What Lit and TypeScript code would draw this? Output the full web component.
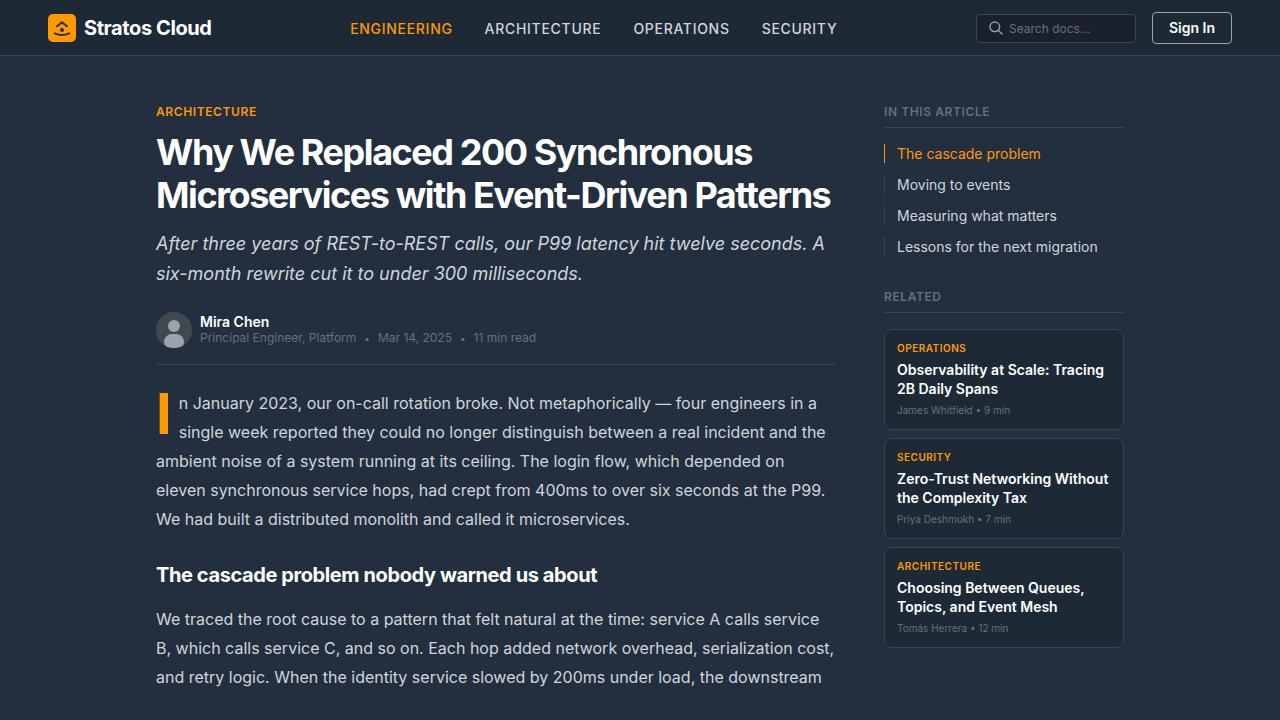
import { LitElement, html, css } from "lit";
import { customElement } from "lit/decorators.js";
import { classMap } from "lit/directives/class-map.js";

interface Story {
  topic: string;
  title: string;
  byline: string;
}

const SECTIONS = ["Engineering", "Architecture", "Operations", "Security"];

const CONTENTS = [
  "The cascade problem",
  "Moving to events",
  "Measuring what matters",
  "Lessons for the next migration",
];

const RELATED: Story[] = [
  {
    topic: "Operations",
    title: "Observability at Scale: Tracing 2B Daily Spans",
    byline: "James Whitfield • 9 min",
  },
  {
    topic: "Security",
    title: "Zero-Trust Networking Without the Complexity Tax",
    byline: "Priya Deshmukh • 7 min",
  },
  {
    topic: "Architecture",
    title: "Choosing Between Queues, Topics, and Event Mesh",
    byline: "Tomás Herrera • 12 min",
  },
];

@customElement("site-header")
export class SiteHeader extends LitElement {
  static styles = css`
    :host {
      display: block;
      background: #1e2936;
      border-bottom: 1px solid #3c464e;
    }
    .bar {
      display: flex;
      align-items: center;
      justify-content: space-between;
      padding: 12px 48px 11px;
    }
    .brand {
      display: flex;
      align-items: center;
      gap: 8px;
      color: #ffffff;
      font-size: 20px;
      line-height: 28px;
      font-weight: 700;
      letter-spacing: -0.02em;
      text-decoration: none;
    }
    .nav {
      display: flex;
      gap: 32px;
    }
    .link {
      color: #d1d5db;
      font-size: 14px;
      line-height: 21px;
      font-weight: 500;
      letter-spacing: 0.05em;
      text-transform: uppercase;
      text-decoration: none;
    }
    .link.active {
      color: #ff9900;
    }
    .actions {
      display: flex;
      align-items: center;
      gap: 16px;
    }
    .search {
      display: flex;
      align-items: center;
      gap: 6px;
      box-sizing: border-box;
      width: 160px;
      padding: 6px 12px;
      border: 1px solid #3c464e;
      border-radius: 4px;
      background: #1a202c;
    }
    .search svg {
      flex: none;
    }
    .field {
      flex: 1;
      min-width: 0;
      height: 15px;
      padding: 0;
      border: 0;
      outline: 0;
      background: none;
      color: #d1d5db;
      font: inherit;
      font-size: 12px;
      line-height: 15px;
    }
    .field::placeholder {
      color: #687078;
      opacity: 1;
    }
    .sign-in {
      padding: 5px 16px;
      border: 1px solid #9ca3af;
      border-radius: 4px;
      background: transparent;
      color: #ffffff;
      font: inherit;
      font-size: 14px;
      line-height: 20px;
      font-weight: 600;
    }
  `;

  render() {
    return html`
      <header class="bar">
        <a class="brand" href="#home">
          <svg width="28" height="28" viewBox="0 0 28 28" aria-hidden="true">
            <rect width="28" height="28" rx="5" fill="#ff9900" />
            <g fill="none" stroke="#232f3e" stroke-width="2" stroke-linecap="round" stroke-linejoin="round">
              <path d="M9 12.3 14 8.2l5 4.1" />
              <path d="M6.8 19.3c4.4 2 10 2 14.4 0" />
            </g>
            <circle cx="14" cy="16" r="2" fill="#232f3e" />
          </svg>
          <span>Stratos Cloud</span>
        </a>
        <nav class="nav" aria-label="Sections">
          ${SECTIONS.map(
            (name, i) => html`<a
              class=${classMap({ link: true, active: i === 0 })}
              href="#${name.toLowerCase()}"
              >${name}</a
            >`,
          )}
        </nav>
        <div class="actions">
          <label class="search">
            <svg
              width="14"
              height="14"
              viewBox="0 0 14 14"
              fill="none"
              stroke="#9ca3af"
              stroke-width="1.4"
              stroke-linecap="round"
              aria-hidden="true"
            >
              <circle cx="5.8" cy="5.8" r="4.8" />
              <path d="m9.4 9.4 3.7 3.7" />
            </svg>
            <input class="field" type="text" placeholder="Search docs..." aria-label="Search docs" />
          </label>
          <button class="sign-in" type="button">Sign In</button>
        </div>
      </header>
    `;
  }
}

@customElement("article-body")
export class ArticleBody extends LitElement {
  static styles = css`
    :host {
      display: block;
      min-width: 0;
    }
    .topic {
      margin: 0 0 11px;
      color: #ff9900;
      font-size: 12px;
      line-height: 16px;
      font-weight: 600;
      letter-spacing: 0.05em;
      text-transform: uppercase;
    }
    .title {
      margin: 0 0 12px;
      color: #ffffff;
      font-size: 36px;
      line-height: 43px;
      font-weight: 700;
      letter-spacing: -0.04em;
    }
    .summary {
      margin: 0 0 23px;
      font-size: 18px;
      line-height: 30px;
      font-style: italic;
    }
    .author {
      display: flex;
      align-items: center;
      gap: 8px;
      padding-bottom: 16px;
      margin-bottom: 24px;
      border-bottom: 1px solid #3c464e;
    }
    .name {
      color: #ffffff;
      font-size: 14px;
      line-height: 16px;
      font-weight: 600;
    }
    .meta {
      display: flex;
      gap: 8px;
      color: #687078;
      font-size: 12px;
      line-height: 16px;
    }
    .dot {
      font-size: 10px;
    }
    .text {
      margin: 0;
      font-size: 16px;
      line-height: 29px;
    }
    .lead::first-letter {
      float: left;
      padding-right: 7px;
      color: #ff9900;
      font-size: 56px;
      line-height: 50px;
      font-weight: 700;
    }
    .heading {
      margin: 27px 0 16px;
      color: #ffffff;
      font-size: 20px;
      line-height: 28px;
      font-weight: 700;
      letter-spacing: -0.02em;
    }
  `;

  render() {
    return html`
      <article>
        <p class="topic">Architecture</p>
        <h1 class="title">Why We Replaced 200 Synchronous Microservices with Event-Driven Patterns</h1>
        <p class="summary">
          After three years of REST-to-REST calls, our P99 latency hit twelve seconds. A six-month
          rewrite cut it to under 300 milliseconds.
        </p>
        <div class="author">
          <svg width="36" height="36" viewBox="0 0 36 36" aria-hidden="true">
            <clipPath id="disc"><circle cx="18" cy="18" r="18" /></clipPath>
            <g clip-path="url(#disc)">
              <rect width="36" height="36" fill="#41484f" />
              <circle cx="18" cy="14" r="6" fill="#9ca3af" />
              <rect x="8" y="22" width="20" height="16" rx="8" fill="#9ca3af" />
            </g>
          </svg>
          <div>
            <div class="name">Mira Chen</div>
            <div class="meta">
              <span>Principal Engineer, Platform</span>
              <span class="dot">•</span>
              <span>Mar 14, 2025</span>
              <span class="dot">•</span>
              <span>11 min read</span>
            </div>
          </div>
        </div>
        <p class="text lead">In January 2023, our on-call rotation broke. Not metaphorically — four
          engineers in a single week reported they could no longer distinguish between a real incident
          and the ambient noise of a system running at its ceiling. The login flow, which depended on
          eleven synchronous service hops, had crept from 400ms to over six seconds at the P99. We had
          built a distributed monolith and called it microservices.</p>
        <h2 class="heading">The cascade problem nobody warned us about</h2>
        <p class="text">
          We traced the root cause to a pattern that felt natural at the time: service A calls service
          B, which calls service C, and so on. Each hop added network overhead, serialization cost, and
          retry logic. When the identity service slowed by 200ms under load, the downstream
        </p>
      </article>
    `;
  }
}

@customElement("article-sidebar")
export class ArticleSidebar extends LitElement {
  static styles = css`
    :host {
      display: block;
    }
    .heading {
      margin: 0 0 16px;
      padding-bottom: 7px;
      border-bottom: 1px solid #3c464e;
      color: #687078;
      font-size: 12px;
      line-height: 16px;
      font-weight: 600;
      letter-spacing: 0.05em;
      text-transform: uppercase;
    }
    .contents {
      display: grid;
      gap: 12px;
      margin: 0 0 33px;
      padding: 0;
      list-style: none;
    }
    .entry {
      display: block;
      padding-left: 12px;
      border-left: 1px solid #3c464e;
      color: #d1d5db;
      font-size: 14px;
      line-height: 19px;
      text-decoration: none;
    }
    .entry.active {
      border-color: #ff9900;
      color: #ff9900;
    }
    .stories {
      display: grid;
      gap: 8px;
    }
    .card {
      display: grid;
      gap: 6px;
      padding: 12px;
      border: 1px solid #3c464e;
      border-radius: 8px;
      background: #1e2936;
      font-size: 10px;
      text-decoration: none;
    }
    .topic {
      color: #ff9900;
      line-height: 12px;
      font-weight: 600;
      letter-spacing: 0.05em;
      text-transform: uppercase;
    }
    .title {
      color: #ffffff;
      font-size: 14px;
      line-height: 19px;
      font-weight: 600;
    }
    .byline {
      color: #687078;
      line-height: 13px;
    }
  `;

  render() {
    return html`
      <aside>
        <h2 class="heading">In this article</h2>
        <ul class="contents">
          ${CONTENTS.map(
            (name, i) => html`<li>
              <a class=${classMap({ entry: true, active: i === 0 })} href="#part-${i + 1}">${name}</a>
            </li>`,
          )}
        </ul>
        <h2 class="heading">Related</h2>
        <div class="stories">
          ${RELATED.map(
            (s) => html`<a class="card" href="#${s.topic.toLowerCase()}">
              <span class="topic">${s.topic}</span>
              <span class="title">${s.title}</span>
              <span class="byline">${s.byline}</span>
            </a>`,
          )}
        </div>
      </aside>
    `;
  }
}

@customElement("app-root")
export class AppRoot extends LitElement {
  static styles = css`
    :host {
      display: block;
      min-height: 100vh;
      background: #232f3e;
      color: #d1d5db;
      font-family: Inter, "Liberation Sans", sans-serif;
    }
    .page {
      display: grid;
      grid-template-columns: minmax(0, 1fr) 240px;
      gap: 48px;
      max-width: 968px;
      margin: 0 auto;
      padding: 48px 24px 24px;
    }
  `;

  render() {
    return html`
      <site-header></site-header>
      <main class="page">
        <article-body></article-body>
        <article-sidebar></article-sidebar>
      </main>
    `;
  }
}
